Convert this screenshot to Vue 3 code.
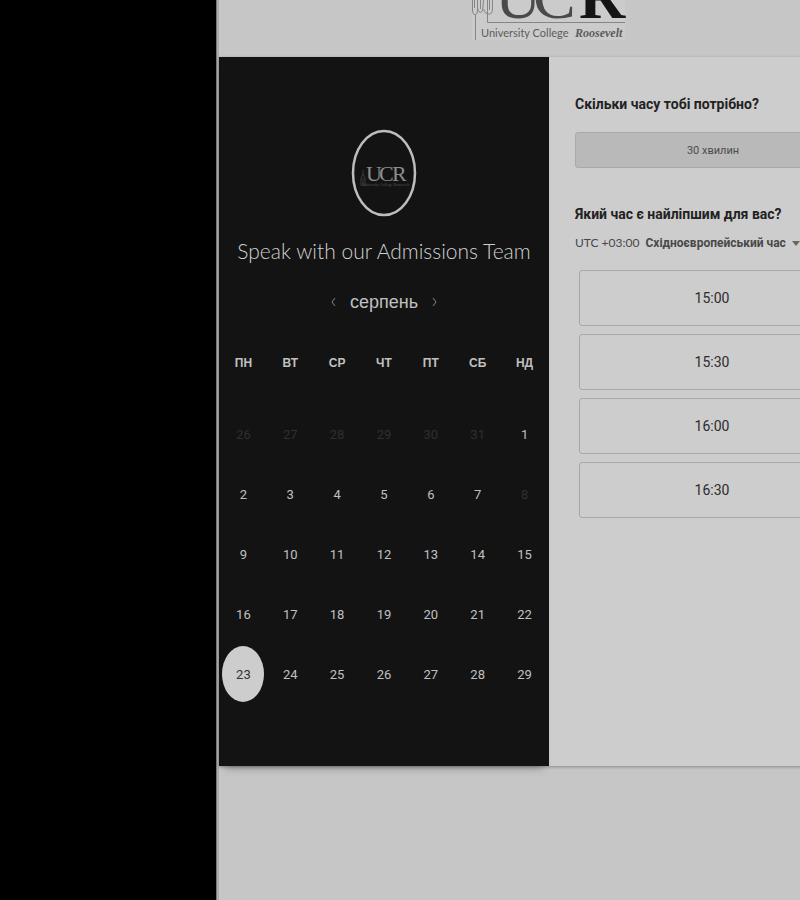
<script setup>
import { ref } from 'vue'

const weekdays = ['ПН', 'ВТ', 'СР', 'ЧТ', 'ПТ', 'СБ', 'НД']
const off = (n) => ({ n, disabled: true })
const on = (n) => ({ n, disabled: false })
const weeks = [
  [off(26), off(27), off(28), off(29), off(30), off(31), on(1)],
  [on(2), on(3), on(4), on(5), on(6), on(7), off(8)],
  [9, 10, 11, 12, 13, 14, 15].map(on),
  [16, 17, 18, 19, 20, 21, 22].map(on),
  [23, 24, 25, 26, 27, 28, 29].map(on),
]
const slots = ['15:00', '15:30', '16:00', '16:30']
const selected = ref(23)
</script>

<template>
  <div class="screen">
    <main class="page">
      <header class="brand">
        <svg class="logo" viewBox="0 0 160 57" role="img" aria-label="University College Roosevelt">
          <rect x="3" y="0" width="153" height="40" fill="#cbcbcb" />
          <g fill="none" stroke="#858585" stroke-width="1">
            <path d="M3.500 0V11Q4 15 6.500 15Q8.500 14 8.500 10V0M6.500 15V40M8.500 8Q10 14 12.500 12Q14 11 14.500 0M11.500 0V9M14.500 9Q16 14 18.500 14Q23.500 15 23.500 9V0M18.500 0V22.500H156M20.500 0V10M5.500 0V8" />
          </g>
          <text class="logo-u" x="26" y="18">U</text>
          <text class="logo-u" x="64" y="18">C</text>
          <text class="logo-r" x="110" y="18">R</text>
          <text class="logo-name" x="12" y="37">University College</text>
          <text class="logo-roos" x="106" y="37">Roosevelt</text>
        </svg>
      </header>

      <div class="card">
        <section class="calendar">
          <svg class="avatar" viewBox="0 0 66 88" role="img" aria-label="UCR">
            <ellipse cx="33" cy="44" rx="31" ry="42" fill="#131313" stroke="#bdbdbd" stroke-width="2.500" />
            <path d="M10 57V49L12 45L14 49V57M12 41V45M12 49V57" fill="none" stroke="#3a3a3a" />
            <text class="avatar-main" x="15" y="52">U</text>
            <text class="avatar-main" x="28" y="52">C</text>
            <text class="avatar-main" x="41" y="52">R</text>
            <text class="avatar-sub" x="11" y="57">University College Roosevelt</text>
          </svg>
          <h1>Speak with our Admissions Team</h1>
          <div class="month">
            <button type="button" aria-label="Попередній місяць">
              <svg viewBox="0 0 6 12"><path d="M5 2L2 6L5 10" /></svg>
            </button>
            <span>серпень</span>
            <button type="button" aria-label="Наступний місяць">
              <svg viewBox="0 0 6 12"><path d="M1 2L4 6L1 10" /></svg>
            </button>
          </div>
          <table>
            <thead>
              <tr><th v-for="d in weekdays" :key="d" scope="col">{{ d }}</th></tr>
            </thead>
            <tbody>
              <tr v-for="(week, i) in weeks" :key="i">
                <td v-for="day in week" :key="day.n">
                  <button
                    type="button"
                    class="day"
                    :class="{ selected: selected === day.n && !day.disabled }"
                    :disabled="day.disabled"
                    @click="selected = day.n"
                  >{{ day.n }}</button>
                </td>
              </tr>
            </tbody>
          </table>
        </section>

        <section class="options">
          <h2>Скільки часу тобі потрібно?</h2>
          <button type="button" class="duration">30 хвилин</button>
          <h2 class="second">Який час є найліпшим для вас?</h2>
          <div class="zone">
            <label for="zone">UTC +03:00</label>
            <select id="zone"><option>Східноєвропейський час</option></select>
            <svg viewBox="0 0 8 5" aria-hidden="true"><path d="M0 0H8L4 5Z" fill="#666" /></svg>
          </div>
          <div class="slots">
            <button v-for="s in slots" :key="s" type="button">{{ s }}</button>
          </div>
        </section>
      </div>
    </main>
  </div>
</template>

<style>
body {
  margin: 0;
  background: #000;
}
</style>

<style scoped>
* {
  box-sizing: border-box;
}
.screen {
  min-height: 100vh;
  padding-left: 27%;
  overflow: hidden;
  background: #000;
  font-family: "Liberation Sans", sans-serif;
}
button,
select {
  margin: 0;
  padding: 0;
  border: 0;
  background: none;
  color: inherit;
  font: inherit;
}
.page {
  width: 666px;
  min-height: 100vh;
  padding: 0 3px;
  background: #c6c6c6;
  box-shadow: inset 1px 0 #777, inset 3px 0 #adadad;
}
.brand {
  display: flex;
  justify-content: center;
}
.logo {
  width: 160px;
  height: 57px;
}
.logo-u,
.logo-r {
  font-family: "Liberation Serif", serif;
  font-size: 64px;
  fill: #4a4a4a;
}
.logo-r {
  font-weight: bold;
  fill: #141414;
}
.logo-name {
  font-family: Lato, sans-serif;
  font-size: 11px;
  fill: #5c5c5c;
}
.logo-roos {
  font-family: "Liberation Serif", serif;
  font-size: 12px;
  font-style: italic;
  font-weight: bold;
  fill: #5c5c5c;
}
.card {
  display: grid;
  grid-template-columns: 1fr 1fr;
  background: #cdcdcd;
  box-shadow: 0 1px 3px rgba(0, 0, 0, 0.3);
}
.calendar {
  display: flex;
  flex-direction: column;
  align-items: center;
  min-width: 0;
  padding: 72px 1px 62px;
  background: #131313;
  color: #c0c0c0;
  box-shadow: 0 8px 8px -6px rgba(0, 0, 0, 0.3);
}
.avatar {
  width: 66px;
  height: 88px;
}
.avatar-main {
  font-family: "Liberation Serif", serif;
  font-size: 22px;
  fill: #8c8c8c;
}
.avatar-sub {
  font-family: "Liberation Serif", serif;
  font-size: 4px;
  fill: #555;
}
h1 {
  margin: 19px 0 0;
  color: #d0d0d0;
  font-family: Lato, sans-serif;
  font-size: 21px;
  font-weight: 300;
  line-height: 30px;
  white-space: nowrap;
}
.month {
  display: flex;
  align-items: center;
  gap: 14px;
  margin: 21px 0 15px;
  font-size: 18px;
  line-height: 30px;
}
.month button {
  display: flex;
}
.month svg {
  width: 6px;
  height: 12px;
  fill: none;
  stroke: #858585;
}
table {
  width: 100%;
  table-layout: fixed;
  border-collapse: collapse;
}
th {
  height: 72px;
  padding: 0;
  font-family: "Liberation Sans", sans-serif;
  font-size: 12px;
  font-weight: bold;
  line-height: 62px;
  vertical-align: top;
}
td {
  height: 60px;
  padding: 0;
  font-family: Roboto, sans-serif;
  font-size: 13px;
  text-align: center;
}
.day {
  width: 42px;
  height: 56px;
  border-radius: 50%;
}
.day:disabled {
  color: #303030;
}
.day.selected {
  background: #cdcdcd;
  color: #333;
}
.options {
  min-width: 0;
  padding: 37px 28px 0 26px;
  color: #222;
}
h2 {
  margin: 0;
  font-family: Roboto, sans-serif;
  font-size: 14px;
  font-weight: bold;
  line-height: 20px;
  white-space: nowrap;
}
.second {
  margin-top: 36px;
}
.duration {
  display: block;
  width: 100%;
  height: 36px;
  margin-top: 18px;
  border: 1px solid #a9a9a9;
  border-radius: 3px;
  background: #b9b9b9;
  color: #4c4c4c;
  font-family: Roboto, sans-serif;
  font-size: 11px;
}
.zone {
  display: flex;
  align-items: center;
  gap: 6px;
  margin-top: 9px;
  color: #484848;
  font-family: Roboto, sans-serif;
  font-size: 12px;
  line-height: 20px;
  white-space: nowrap;
}
.zone label {
  font-family: Lato, sans-serif;
}
.zone select {
  appearance: none;
  font-weight: bold;
}
.zone svg {
  width: 8px;
  height: 5px;
}
.slots {
  display: grid;
  gap: 8px;
  margin-top: 17px;
  padding: 0 6px 0 4px;
}
.slots button {
  height: 56px;
  border: 1px solid #a8a8a8;
  border-radius: 3px;
  color: #2c2c2c;
  font-family: Roboto, sans-serif;
  font-size: 14px;
}
</style>
